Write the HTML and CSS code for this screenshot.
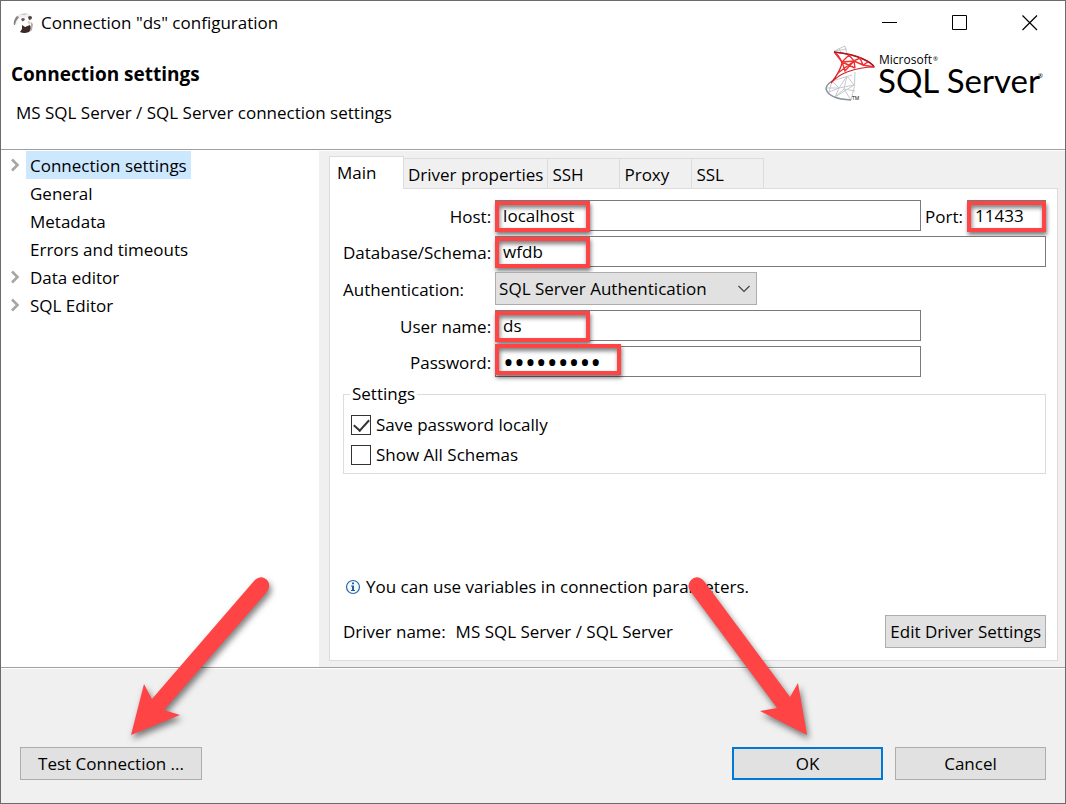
FILE: index.html
```html
<!DOCTYPE html>
<html lang="en">
<head>
    <meta charset="UTF-8">
    <meta name="viewport" content="width=device-width, initial-scale=1.0">
    <title>Connection "ds" configuration</title>
    <link rel="stylesheet" href="styles.css">
</head>
<body>
    <div class="dialog">
        <!-- Title bar -->
        <div class="titlebar">
            <svg class="app-icon" viewBox="0 0 22 22" width="22" height="22" aria-hidden="true">
                <path d="M3 6Q6 2 10 1Q15 0 19 3L17 6L10 5L6 8L4 14Z" fill="#f1efee"/>
                <path d="M2 13Q1 8 5 4L7 5Q4 8 3 13Z" fill="#8a8280"/>
                <path d="M8 3L15 1L13 3Z" fill="#c5bfbd"/>
                <path d="M9 7Q11 5 13 7Q12 10 10 9Z" fill="#6a5c58"/>
                <path d="M16 5Q18 3 20 5Q20 8 17 8Z" fill="#51433f"/>
                <path d="M15 9Q18 8 19 11L17 13Z" fill="#dcd7d5"/>
                <path d="M10 13L13 15L18 13Q20 17 17 20Q12 22 8 20L10 17Z" fill="#3b2a27"/>
                <path d="M19 10L21 12L20 18L18 20L19 15Z" fill="#b3aba8"/>
            </svg>
            <span class="title">Connection "ds" configuration</span>
            <div class="window-buttons">
                <button class="win-btn" aria-label="Minimize">
                    <svg width="16" height="16" viewBox="0 0 16 16"><path d="M0 7.5H15" stroke="#000"/></svg>
                </button>
                <button class="win-btn" aria-label="Maximize">
                    <svg width="16" height="16" viewBox="0 0 16 16"><path d="M.5 .5H14.5V14.5H.5Z" fill="none" stroke="#000"/></svg>
                </button>
                <button class="win-btn" aria-label="Close">
                    <svg width="16" height="16" viewBox="0 0 16 16"><path d="M.5 .5L15 15M15 .5L.5 15" stroke="#000" stroke-width="1.2"/></svg>
                </button>
            </div>
        </div>

        <!-- Page header -->
        <div class="header">
            <div class="header-text">
                <h1>Connection settings</h1>
                <p>MS SQL Server / SQL Server connection settings</p>
            </div>
            <svg class="logo" viewBox="0 0 222 58" width="222" height="58" role="img" aria-label="Microsoft SQL Server">
                <g fill="none" stroke="#c6c9cd" stroke-width="1">
                    <path d="M9 6L20 1L22 10M9 6L14 10M10 6L22 4M14 4L17 9"/>
                    <path d="M7 36Q1 40 1 44Q4 54 26 55Q31 42 30 27M7 36L27 30"/>
                    <path d="M7 36L14 43L22 31L29 40L14 43L4 47M1 43L14 43L10 52L19 44L26 55M10 52L29 40M7 36L4 47M22 31L19 44L30 46"/>
                    <path d="M7 36Q1 40 1 44Q4 54 26 55" stroke="#8f959e" stroke-width="1.4"/>
                </g>
                <path d="M9 7Q28 9 38 14Q47 18 49 22Q36 22 22 27Q12 31 6 38Q15 27 17 18Q15 11 9 7Z" fill="#fff" stroke="#d5202a" stroke-width="1.2"/>
                <path d="M9 7Q28 9 38 14Q47 18 49 22" fill="none" stroke="#b01620" stroke-width="1.6"/>
                <path d="M10 8L17 17L24 10L29 16L35 13L38 20L43 17M17 17L29 16L38 20L49 22M17 17L20 26L29 16L30 23M17 17L30 23M13 28L29 16" fill="none" stroke="#ee3030" stroke-width="1.4"/>
                <text class="logo-tm" x="27" y="55">TM</text>
                <text class="logo-small" x="54" y="19">Microsoft</text>
                <text class="logo-reg" x="108" y="16">®</text>
                <text class="logo-big" x="53" y="48">SQL Server</text>
                <text class="logo-reg" x="213" y="33">®</text>
            </svg>
        </div>

        <!-- Navigation and settings page -->
        <div class="main">
            <ul class="tree">
                <li class="branch">
                    <svg class="arrow" width="10" height="14" viewBox="0 0 10 14"><path d="M2 1.5L7.500 7L2 12.500" fill="none" stroke="#a6a6a6" stroke-width="2.6"/></svg>
                    <a href="#" class="selected">Connection settings</a>
                </li>
                <li><a href="#">General</a></li>
                <li><a href="#">Metadata</a></li>
                <li><a href="#">Errors and timeouts</a></li>
                <li class="branch">
                    <svg class="arrow" width="10" height="14" viewBox="0 0 10 14"><path d="M2 1.5L7.500 7L2 12.500" fill="none" stroke="#a6a6a6" stroke-width="2.6"/></svg>
                    <a href="#">Data editor</a>
                </li>
                <li class="branch">
                    <svg class="arrow" width="10" height="14" viewBox="0 0 10 14"><path d="M2 1.5L7.500 7L2 12.500" fill="none" stroke="#a6a6a6" stroke-width="2.6"/></svg>
                    <a href="#">SQL Editor</a>
                </li>
            </ul>

            <div class="page">
                <div class="tabs">
                    <button class="tab active">Main</button>
                    <button class="tab">Driver properties</button>
                    <button class="tab">SSH</button>
                    <button class="tab">Proxy</button>
                    <button class="tab">SSL</button>
                </div>
                <div class="panel">
                    <div class="form">
                        <label for="host">Host:</label>
                        <div class="field">
                            <input type="text" id="host" value="localhost">
                            <span class="mark"></span>
                        </div>
                        <label for="port">Port:</label>
                        <div class="field">
                            <input type="text" id="port" value="11433">
                            <span class="mark mark-full"></span>
                        </div>

                        <label for="database">Database/Schema:</label>
                        <div class="field wide">
                            <input type="text" id="database" value="wfdb">
                            <span class="mark"></span>
                        </div>

                        <label for="auth" class="left">Authentication:</label>
                        <div class="field select-field wide">
                            <select id="auth">
                                <option>SQL Server Authentication</option>
                            </select>
                            <svg class="chevron" width="12" height="8" viewBox="0 0 12 8"><path d="M.5 1L6 6.500L11.500 1" fill="none" stroke="#444" stroke-width="1.2"/></svg>
                        </div>

                        <label for="user" class="row-start">User name:</label>
                        <div class="field">
                            <input type="text" id="user" value="ds">
                            <span class="mark"></span>
                        </div>

                        <label for="password" class="row-start">Password:</label>
                        <div class="field">
                            <input type="password" id="password" value="password1">
                            <span class="mark mark-long"></span>
                        </div>
                    </div>

                    <fieldset class="settings">
                        <legend>Settings</legend>
                        <div class="check">
                            <input type="checkbox" id="save-password" checked>
                            <label for="save-password">Save password locally</label>
                        </div>
                        <div class="check">
                            <input type="checkbox" id="show-schemas">
                            <label for="show-schemas">Show All Schemas</label>
                        </div>
                    </fieldset>

                    <div class="info">
                        <svg width="16" height="16" viewBox="0 0 16 16" aria-hidden="true">
                            <circle cx="8" cy="8" r="6.500" fill="#f4f9fd" stroke="#2b6ba8" stroke-width="1.2"/>
                            <path d="M7 3.500H9V5.300H7ZM6 6.500H9V11H10V12H6V11H7V7.500H6Z" fill="#1f5f9e"/>
                        </svg>
                        <span>You can use variables in connection parameters.</span>
                    </div>
                    <div class="driver">
                        <span>Driver name:</span>
                        <span>MS SQL Server / SQL Server</span>
                        <button class="btn btn-edit">Edit Driver Settings</button>
                    </div>
                </div>
            </div>
        </div>

        <!-- Buttons -->
        <div class="footer">
            <div class="action">
                <button class="btn btn-test">Test Connection ...</button>
                <svg class="pointer pointer-test" width="160" height="175" viewBox="0 0 160 175">
                    <path d="M134 11Q141 4 147 10Q152 16 146 23L44 140L60 145L11 165L24 114L32 129Z" fill="#fe4444"/>
                </svg>
            </div>
            <div class="action push">
                <button class="btn btn-default">OK</button>
                <svg class="pointer pointer-ok" width="140" height="175" viewBox="0 0 140 175">
                    <path d="M24 11Q17 4 11 10Q6 16 11 22L97 138L80 141L127 165L118 113L110 127Z" fill="#fe4444"/>
                </svg>
            </div>
            <button class="btn">Cancel</button>
        </div>
    </div>
</body>
</html>
```
FILE: styles.css
```css
:root {
    --face: #f0f0f0;
    --button: #e1e1e1;
    --line: #a0a0a0;
    --soft: #dcdcdc;
    --red: #fe4444;
}
* {
    box-sizing: border-box;
}
body {
    margin: 0;
    font-family: "Open Sans", "Noto Sans", sans-serif;
    font-size: 17px;
    line-height: 24px;
    color: #000;
}
button, input, select {
    font: inherit;
    color: inherit;
}
.dialog {
    display: flex;
    flex-direction: column;
    min-height: 100vh;
    border: 1px solid #6b6b6b;
    background: var(--face);
}

/* Title bar */
.titlebar {
    display: flex;
    align-items: center;
    height: 44px;
    padding-left: 11px;
    background: white;
}
.title {
    margin-left: 7px;
}
.window-buttons {
    display: flex;
    margin-left: auto;
}
.win-btn {
    display: flex;
    justify-content: center;
    align-items: center;
    width: 70px;
    height: 44px;
    padding: 0;
    border: none;
    background: none;
}

/* Header */
.header {
    display: flex;
    justify-content: space-between;
    height: 105px;
    padding: 0 18px 0 10px;
    background: white;
    border-bottom: 1px solid var(--line);
}
.header-text {
    padding-top: 17px;
}
.header h1 {
    margin: 0;
    font-size: 19px;
    line-height: 24px;
}
.header p {
    margin: 15px 0 0 5px;
}
.logo-small {
    font: 12px "Open Sans", sans-serif;
}
.logo-big {
    font: 33px Lato, sans-serif;
}
.logo-reg {
    font: 6px "Open Sans", sans-serif;
}
.logo-tm {
    font: 5px "Open Sans", sans-serif;
}

/* Body */
.main {
    display: flex;
    flex: 1;
    border-top: 1px solid white;
    border-bottom: 1px solid var(--line);
}
.tree {
    flex: 0 0 318px;
    margin: 0;
    padding: 0;
    list-style: none;
    background: white;
}
.tree li {
    display: flex;
    align-items: center;
    height: 28px;
    padding-left: 25px;
}
.tree .branch {
    padding-left: 9px;
}
.arrow {
    margin-right: 6px;
}
.tree a {
    padding: 3px 4px 1px;
    color: inherit;
    text-decoration: none;
}
.tree .selected {
    background: #cce8ff;
}
.page {
    display: flex;
    flex: 1;
    flex-direction: column;
    padding: 5px 7px 6px 10px;
}
.tabs {
    display: flex;
    align-items: flex-end;
}
.tab {
    min-width: 72px;
    height: 30px;
    padding: 2px 4px 0;
    border: 1px solid var(--soft);
    border-width: 1px 1px 0 0;
    background: none;
    text-align: left;
}
.tab.active {
    z-index: 1;
    width: 75px;
    height: 33px;
    margin-bottom: -1px;
    padding: 0 7px 1px;
    border-left-width: 1px;
    background: white;
}
.panel {
    display: flex;
    flex: 1;
    flex-direction: column;
    padding: 11px 11px 12px 13px;
    border: 1px solid var(--soft);
    background: white;
}

/* Form */
.form {
    display: grid;
    grid-template-columns: auto 1fr auto 79px;
    gap: 5px 4px;
    align-items: center;
}
.form label {
    padding-top: 2px;
    text-align: right;
}
.form .left {
    text-align: left;
}
.field {
    position: relative;
}
.wide {
    grid-column: 2 / -1;
}
.row-start {
    grid-column: 1;
}
.field input {
    display: block;
    width: 100%;
    height: 31px;
    padding: 0 7px;
    border: 1px solid #7a7a7a;
    background: white;
}
.field input[type="password"] {
    font-size: 29px;
}
.select-field {
    justify-self: start;
    width: 262px;
}
.select-field select {
    display: block;
    width: 100%;
    height: 33px;
    padding: 0 3px;
    border: 1px solid #adadad;
    border-radius: 0;
    background: var(--button);
    appearance: none;
}
.chevron {
    position: absolute;
    top: 13px;
    right: 7px;
    pointer-events: none;
}
.mark {
    position: absolute;
    top: 1px;
    left: 0;
    width: 95px;
    height: 31px;
    border: 4px solid var(--red);
    box-shadow: 1px 3px 4px rgba(0, 0, 0, 0.5), inset 1px 3px 4px rgba(0, 0, 0, 0.5);
    pointer-events: none;
}
.mark-full {
    width: 100%;
}
.mark-long {
    top: -2px;
    width: 126px;
}

/* Settings */
.settings {
    margin: 5px 0 0;
    padding: 4px 7px 3px;
    border: 1px solid var(--soft);
}
.settings legend {
    margin-left: -1px;
    padding: 0 2px;
}
.check {
    display: flex;
    gap: 5px;
    align-items: center;
    height: 30px;
}
.check input {
    display: flex;
    justify-content: center;
    width: 20px;
    height: 20px;
    margin: 0;
    border: 1px solid #333;
    background: white;
    appearance: none;
}
.check input:checked::before {
    content: "";
    width: 7px;
    height: 13px;
    border: solid #333;
    border-width: 0 2px 2px 0;
    transform: rotate(42deg);
}
.info {
    display: flex;
    gap: 5px;
    align-items: center;
    margin-top: auto;
    padding-left: 2px;
}
.driver {
    display: flex;
    gap: 10px;
    align-items: center;
    margin-top: 16px;
}

/* Buttons */
.btn {
    min-width: 151px;
    height: 33px;
    padding: 0 4px;
    border: 1px solid #adadad;
    background: var(--button);
}
.btn-default {
    border: 2px solid #0078d7;
}
.btn-edit {
    margin-left: auto;
}
.btn-test {
    width: 182px;
}
.footer {
    display: flex;
    gap: 12px;
    padding: 78px 19px 23px;
    border-top: 1px solid white;
}
.action {
    position: relative;
}
.push {
    margin-left: auto;
}

/* Callout arrows over the dialog */
.pointer {
    position: absolute;
    bottom: 35px;
    filter: drop-shadow(2px 4px 3px rgba(0, 0, 0, 0.5));
    pointer-events: none;
}
.pointer-test {
    left: 100px;
}
.pointer-ok {
    left: -52px;
}
```
